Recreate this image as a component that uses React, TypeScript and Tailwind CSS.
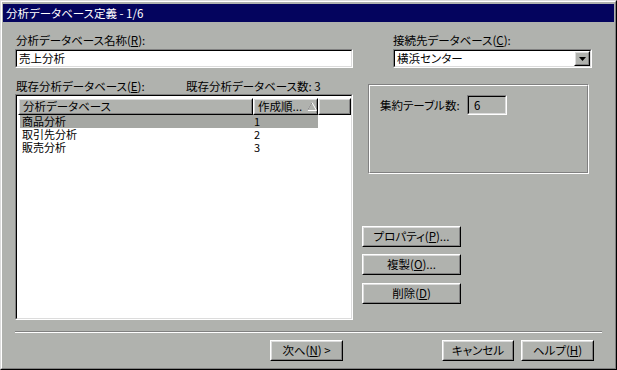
import React from "react";

const font = "[font-family:'Noto_Sans_CJK_JP','Noto_Sans',sans-serif] [font-feature-settings:'palt']";

function Raised({ className = "", children, inner = "" }: { className?: string; children?: React.ReactNode; inner?: string }) {
  return (
    <div className={`border border-t-white border-l-white border-r-black border-b-black ${className}`}>
      <div className={`h-full w-full border border-t-[#dcdcdc] border-l-[#dcdcdc] border-r-[#808080] border-b-[#808080] flex items-center ${inner}`}>
        {children}
      </div>
    </div>
  );
}

function Sunken({ className = "", children, inner = "" }: { className?: string; children?: React.ReactNode; inner?: string }) {
  return (
    <div className={`border border-t-[#808080] border-l-[#808080] border-r-white border-b-white ${className}`}>
      <div className={`h-full w-full border border-t-black border-l-black border-r-[#dcdcdc] border-b-[#dcdcdc] ${inner}`}>
        {children}
      </div>
    </div>
  );
}

function U({ c }: { c: string }) {
  return <span className="underline underline-offset-[1px]">{c}</span>;
}

export default function App() {
  return (
    <div className={`w-[617px] h-[370px] bg-[#b0b2ae] border border-t-[#dcdcdc] border-l-[#dcdcdc] border-r-black border-b-black text-[11.5px] leading-[13px] text-black whitespace-nowrap ${font}`}>
      <div className="h-full w-full border border-t-white border-l-white border-r-[#808080] border-b-[#808080] flex flex-col">
        {/* title bar */}
        <div className="mt-[2px] mx-[1px] h-[18px] bg-[#04045e] text-white flex items-center pl-[3px] text-[11.5px]">
          分析データベース定義 - 1/6
        </div>

        <div className="flex-1 flex flex-col pl-[13px] pr-[13px]">
          {/* row 1 */}
          <div className="flex mt-[12px]">
            <div className="w-[338px] flex flex-col">
              <div className="h-[15px] pl-[1px]">
                分析データベース名称(<U c="R" />):
              </div>
              <Sunken className="h-[19px] bg-white" inner="flex items-center pl-[2px]">
                売上分析
              </Sunken>
            </div>
            <div className="ml-[40px] w-[199px] flex flex-col">
              <div className="h-[15px]">
                接続先データベース(<U c="C" />):
              </div>
              <Sunken className="h-[19px] bg-white" inner="flex items-center pl-[2px]">
                <span className="flex-1">横浜センター</span>
                <Raised className="w-[16px] h-[15px] bg-[#b0b2ae]" inner="justify-center">
                  <svg width="7" height="4" viewBox="0 0 7 4">
                    <polygon points="0,0 7,0 3.5,4" fill="black" />
                  </svg>
                </Raised>
              </Sunken>
            </div>
          </div>

          {/* row 2 */}
          <div className="flex mt-[12px]">
            <div className="w-[338px] flex flex-col">
              <div className="h-[13px] flex pl-[1px]">
                <span className="w-[170px]">
                  既存分析データベース(<U c="E" />):
                </span>
                <span>既存分析データベース数: 3</span>
              </div>
              <Sunken className="h-[226px] bg-white mt-[1px]" inner="flex flex-col">
                <div className="flex h-[19px] pt-[2px]">
                  <Raised className="w-[235px] h-[17px] bg-[#b0b2ae] ml-[1px]" inner="pl-[3px]">
                    分析データベース
                  </Raised>
                  <Raised className="w-[65px] h-[17px] bg-[#b0b2ae]" inner="pl-[3px]">
                    <span>作成順...</span>
                    <svg width="10" height="9" viewBox="0 0 10 9" className="ml-[5px] shrink-0">
                      <polyline points="0.5,8.5 5,0.5 9.5,8.5" fill="none" stroke="#ffffff" strokeWidth="1" />
                      <line x1="0.5" y1="8.5" x2="9.5" y2="8.5" stroke="#ffffff" strokeWidth="1" />
                      <line x1="5" y1="0.5" x2="0.5" y2="8.5" stroke="#808080" strokeWidth="1" />
                    </svg>
                  </Raised>
                  <Raised className="flex-1 h-[17px] bg-[#b0b2ae]" />
                </div>
                <div className="flex flex-col pl-[3px] text-[11px] leading-[13px]">
                  <div className="flex h-[13px] w-[298px] bg-[#a5a7a3] items-center">
                    <span className="w-[234px] pl-[2px]">商品分析</span>
                    <span>1</span>
                  </div>
                  <div className="flex h-[13px] w-[298px] items-center">
                    <span className="w-[234px] pl-[2px]">取引先分析</span>
                    <span>2</span>
                  </div>
                  <div className="flex h-[13px] w-[298px] items-center">
                    <span className="w-[234px] pl-[2px]">販売分析</span>
                    <span>3</span>
                  </div>
                </div>
              </Sunken>
            </div>

            <div className="ml-[9px] flex flex-col">
              {/* group box */}
              <div className="ml-[6px] mt-[4px] w-[221px] h-[90px] border border-t-[#808080] border-l-[#808080] border-r-white border-b-white">
                <div className="h-full w-full border border-t-white border-l-white border-r-[#808080] border-b-[#808080] flex items-start pl-[10px] pt-[9px]">
                  <div className="flex items-center">
                    <span className="mt-[1px] w-[87px]">集約テーブル数:</span>
                    <Sunken className="w-[40px] h-[20px]" inner="flex items-center pl-[5px]">
                      6
                    </Sunken>
                  </div>
                </div>
              </div>
              {/* buttons */}
              <Raised className="mt-[52px] w-[99px] h-[21px]" inner="justify-center">
                プロパティ(<U c="P" />)...
              </Raised>
              <Raised className="mt-[7px] w-[99px] h-[21px]" inner="justify-center">
                複製(<U c="O" />)...
              </Raised>
              <Raised className="mt-[8px] w-[99px] h-[21px]" inner="justify-center">
                削除(<U c="D" />)
              </Raised>
            </div>
          </div>

          {/* separator */}
          <div className="mt-[11px] w-[587px] border-t border-t-[#808080] border-b border-b-white" />

          {/* bottom buttons */}
          <div className="flex mt-[7px]">
            <Raised className="ml-[255px] w-[73px] h-[21px]" inner="justify-center">
              次へ(<U c="N" />) &gt;
            </Raised>
            <Raised className="ml-[99px] w-[72px] h-[21px]" inner="justify-center">
              キャンセル
            </Raised>
            <Raised className="ml-[7px] w-[73px] h-[21px]" inner="justify-center">
              ヘルプ(<U c="H" />)
            </Raised>
          </div>
        </div>
      </div>
    </div>
  );
}
